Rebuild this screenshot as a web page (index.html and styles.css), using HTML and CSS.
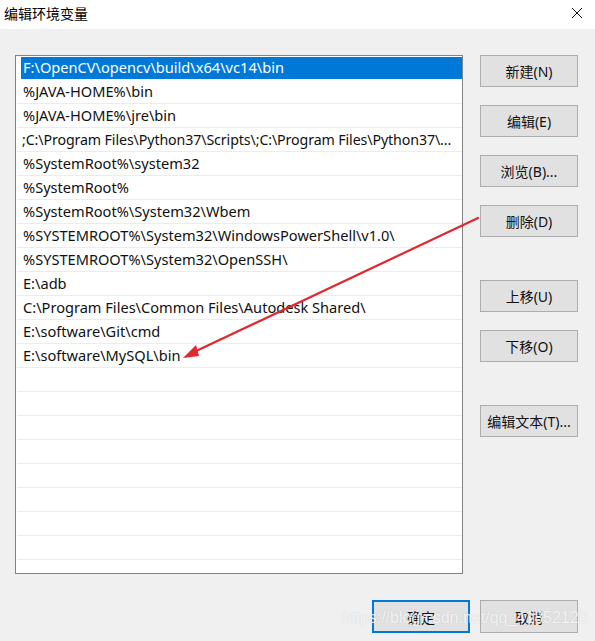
FILE: index.html
```html
<!DOCTYPE html>
<html lang="zh">
<head>
<meta charset="utf-8">
<title>编辑环境变量</title>
<link rel="stylesheet" href="styles.css">
</head>
<body>
<div class="dialog">
  <div class="titlebar">
    <span class="title">编辑环境变量</span>
    <svg class="close" width="12" height="12" viewBox="0 0 12 12"><path d="M1 1L11 11M11 1L1 11" stroke="#111" stroke-width="1" fill="none"/></svg>
  </div>
  <div class="main">
    <div class="listbox">
      <div class="row selected"><span>F:\OpenCV\opencv\build\x64\vc14\bin</span></div>
      <div class="row"><span>%JAVA-HOME%\bin</span></div>
      <div class="row"><span>%JAVA-HOME%\jre\bin</span></div>
      <div class="row"><span class="tight">;C:\Program Files\Python37\Scripts\;C:\Program Files\Python37\...</span></div>
      <div class="row"><span>%SystemRoot%\system32</span></div>
      <div class="row"><span>%SystemRoot%</span></div>
      <div class="row"><span>%SystemRoot%\System32\Wbem</span></div>
      <div class="row"><span>%SYSTEMROOT%\System32\WindowsPowerShell\v1.0\</span></div>
      <div class="row"><span>%SYSTEMROOT%\System32\OpenSSH\</span></div>
      <div class="row"><span>E:\adb</span></div>
      <div class="row"><span>C:\Program Files\Common Files\Autodesk Shared\</span></div>
      <div class="row"><span>E:\software\Git\cmd</span></div>
      <div class="row"><span>E:\software\MySQL\bin</span></div>
      <div class="row"></div>
      <div class="row"></div>
      <div class="row"></div>
      <div class="row"></div>
      <div class="row"></div>
      <div class="row"></div>
      <div class="row"></div>
      <div class="row"></div>
      <div class="row"></div>
      <div class="row"></div>
    </div>
    <div class="side">
      <div class="group">
        <button class="btn">新建(N)</button>
        <button class="btn">编辑(E)</button>
        <button class="btn">浏览(B)...</button>
        <button class="btn">删除(D)</button>
      </div>
      <div class="group">
        <button class="btn">上移(U)</button>
        <button class="btn">下移(O)</button>
      </div>
      <div class="group">
        <button class="btn">编辑文本(T)...</button>
      </div>
    </div>
  </div>
  <div class="footer">
    <button class="btn primary">确定</button>
    <button class="btn">取消</button>
  </div>
  <div class="watermark">https://blog.csdn.net/qq_41852120</div>
  <svg class="arrow" width="595" height="641" viewBox="0 0 595 641">
    <line x1="478" y1="218" x2="194" y2="352" stroke="#e0282e" stroke-width="2.2" stroke-linecap="round"/>
    <polygon points="183,358 196,345 199,356" fill="#e0282e"/>
  </svg>
</div>
</body>
</html>
```
FILE: styles.css
```css
* { box-sizing: border-box; }
html, body { margin: 0; padding: 0; }
body {
  background: #f0f0f0;
  font-family: "Noto Sans", "Noto Sans CJK SC", sans-serif;
  color: #111;
}
.dialog {
  position: relative;
  width: 595px;
  height: 641px;
  background: #f0f0f0;
  overflow: hidden;
}
.titlebar {
  height: 29px;
  background: #fff;
  display: flex;
  align-items: center;
  justify-content: space-between;
  padding: 0 12px 4px 4px;
}
.title {
  font-family: "Noto Sans CJK SC", sans-serif;
  font-size: 14px;
  color: #000;
}
.close { display: block; }
.main {
  display: flex;
  padding: 26px 0 0 15px;
  gap: 17px;
}
.listbox {
  width: 448px;
  height: 519px;
  border: 1px solid #828282;
  background: #fff;
  padding: 0 0 0 1px;
  overflow: hidden;
}
.row {
  height: 24px;
  border-bottom: 1px solid #ececec;
  font-size: 14.6px;
  line-height: 23px;
  white-space: nowrap;
  overflow: hidden;
}
.row span {
  display: block;
  padding: 0 3px 0 6px;
  overflow: hidden;
  text-overflow: ellipsis;
  color: #111;
}
.row span.tight {
  font-size: 14.2px;
  letter-spacing: -0.1px;
  padding-left: 5px;
}
.row.selected {
  border-bottom-color: #fff;
}
.row.selected span {
  margin: 1px 0 0 4px;
  padding-left: 2px;
  height: 22px;
  line-height: 21px;
  background: #0078d7;
  color: #fff;
}
.side {
  display: flex;
  flex-direction: column;
  gap: 43px;
}
.group {
  display: flex;
  flex-direction: column;
  gap: 18px;
}
.btn {
  width: 98px;
  height: 32px;
  background: #e1e1e1;
  border: 1px solid #adadad;
  font-family: "Noto Sans", "Noto Sans CJK SC", sans-serif;
  font-size: 14px;
  color: #111;
  padding: 0;
  margin: 0;
  white-space: nowrap;
}
.footer {
  position: absolute;
  left: 372px;
  top: 600px;
  display: flex;
  gap: 10px;
}
.footer .btn { height: 33px; }
.btn.primary {
  border: 2px solid #0078d7;
}
.watermark {
  position: absolute;
  left: 342px;
  top: 609px;
  font-family: "Liberation Sans", sans-serif;
  font-size: 16px;
  color: rgba(255, 255, 255, 0.8);
  text-shadow: 0 0 1px rgba(160, 160, 160, 0.5);
  pointer-events: none;
}
.arrow {
  position: absolute;
  left: 0;
  top: 0;
  pointer-events: none;
}
```
